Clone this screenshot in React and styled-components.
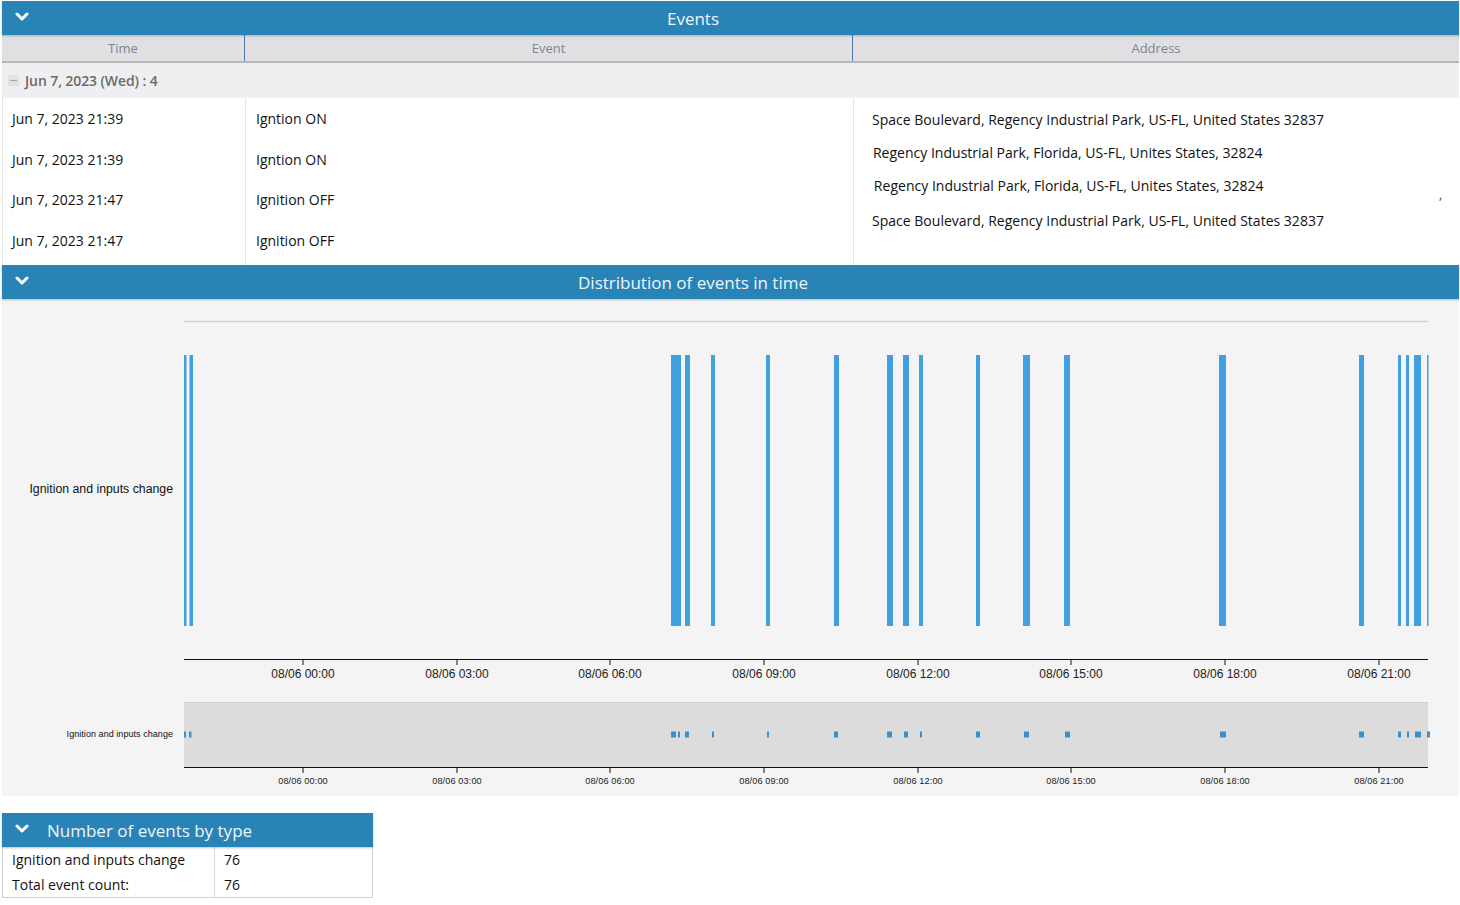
import React from 'react'
import styled, { createGlobalStyle } from 'styled-components'

const GlobalStyle = createGlobalStyle`
  html, body {
    margin: 0;
    padding: 0;
    background: #fff;
  }
  body {
    font-family: "Open Sans", "Noto Sans", sans-serif;
  }
`

const rows = [
  { time: 'Jun 7, 2023 21:39', event: 'Igntion ON' },
  { time: 'Jun 7, 2023 21:39', event: 'Igntion ON' },
  { time: 'Jun 7, 2023 21:47', event: 'Ignition OFF' },
  { time: 'Jun 7, 2023 21:47', event: 'Ignition OFF' },
]

const addresses = [
  { text: 'Space Boulevard, Regency Industrial Park, US-FL, United States 32837', indent: 0, gap: 0 },
  { text: 'Regency Industrial Park, Florida, US-FL, Unites States, 32824', indent: 1, gap: 0 },
  { text: 'Regency Industrial Park, Florida, US-FL, Unites States, 32824', indent: 2, gap: 0 },
  { text: 'Space Boulevard, Regency Industrial Park, US-FL, United States 32837', indent: 0, gap: 2 },
]

// bar spans in px on the plot, [start, end]
const mainBars = [
  [184, 186.5], [189.5, 193], [671, 681], [685, 690], [711, 715], [766, 770],
  [834, 839], [887, 893], [903, 909], [919, 923], [976, 980], [1023, 1030],
  [1064, 1070], [1219, 1226], [1359, 1364], [1398, 1401], [1406, 1409],
  [1414, 1421], [1427, 1428.5],
]

const navBars = [
  [184, 186], [189, 191.5], [671, 676], [678, 680], [685, 689], [712, 714],
  [767, 769], [834, 838], [887, 892], [904, 908], [920, 922], [976, 980],
  [1024, 1029], [1065, 1070], [1220, 1226], [1359, 1364], [1398, 1401],
  [1407, 1409], [1415, 1421], [1427, 1430],
]

const ticks = [
  [303, '08/06 00:00'], [457, '08/06 03:00'], [610, '08/06 06:00'],
  [764, '08/06 09:00'], [918, '08/06 12:00'], [1071, '08/06 15:00'],
  [1225, '08/06 18:00'], [1379, '08/06 21:00'],
]

const Chevron = () => (
  <ChevronSvg viewBox="0 0 14 10" width="14" height="10">
    <polyline points="2,2 7,7 12,2" fill="none" stroke="#fff" strokeWidth="3" strokeLinecap="round" strokeLinejoin="round" />
  </ChevronSvg>
)

const DistributionChart = () => (
  <ChartSvg viewBox="2 300 1457 497" width="1457" height="497">
    <rect x="2" y="300" width="1457" height="497" fill="#f4f4f4" />
    <line x1="184" y1="322.5" x2="1428" y2="322.5" stroke="#d2d2d2" strokeWidth="1.5" />
    {mainBars.map(([a, b], i) => (
      <rect key={i} x={a} y="356" width={b - a} height="271" fill="#41a0df" />
    ))}
    <text x="173" y="493.5" textAnchor="end" fontSize="12.3" fill="#111">Ignition and inputs change</text>

    <line x1="184" y1="660.5" x2="1428" y2="660.5" stroke="#111" strokeWidth="1.2" />
    {ticks.map(([x, label]) => (
      <g key={label}>
        <line x1={x} y1="660" x2={x} y2="666" stroke="#111" strokeWidth="1" />
        <text x={x} y="678.5" textAnchor="middle" fontSize="12" fill="#222">{label}</text>
      </g>
    ))}

    <rect x="184" y="703" width="1244" height="65" fill="#dcdcdc" />
    <line x1="184" y1="703.5" x2="1428" y2="703.5" stroke="#d0d0d0" strokeWidth="1" />
    {navBars.map(([a, b], i) => (
      <rect key={i} x={a} y="732.5" width={b - a} height="6" fill="#3a8fcc" />
    ))}
    <text x="173" y="738" textAnchor="end" fontSize="9" letterSpacing="0.05" fill="#111">Ignition and inputs change</text>

    <line x1="184" y1="768.5" x2="1428" y2="768.5" stroke="#111" strokeWidth="1.2" />
    {ticks.map(([x, label]) => (
      <g key={label}>
        <line x1={x} y1="768" x2={x} y2="774" stroke="#111" strokeWidth="1" />
        <text x={x} y="784.5" textAnchor="middle" fontSize="9.2" letterSpacing="0.1" fill="#222">{label}</text>
      </g>
    ))}
  </ChartSvg>
)

const App = () => {
  return (
    <>
      <GlobalStyle />
      <Page>
        <Panel>
          <PanelHeader>
            <Chevron />
            <PanelTitle>Events</PanelTitle>
          </PanelHeader>
          <Table>
            <HeadCell>Time</HeadCell>
            <HeadCell>Event</HeadCell>
            <HeadCell last>Address</HeadCell>
          </Table>
          <GroupRow>
            <Collapse>
              <span />
            </Collapse>
            Jun 7, 2023 (Wed) : 4
          </GroupRow>
          <Body>
            {rows.map((r, i) => (
              <React.Fragment key={i}>
                <Cell style={{ gridRow: i + 1 }}>{r.time}</Cell>
                <Cell event style={{ gridRow: i + 1 }}>{r.event}</Cell>
              </React.Fragment>
            ))}
            <AddressCell>
              {addresses.map((a, i) => (
                <AddressLine key={i} indent={a.indent} gap={a.gap}>{a.text}</AddressLine>
              ))}
              <Stray>,</Stray>
            </AddressCell>
          </Body>

          <PanelHeader>
            <Chevron />
            <PanelTitle>Distribution of events in time</PanelTitle>
          </PanelHeader>
          <ChartBox>
            <DistributionChart />
          </ChartBox>
        </Panel>

        <SmallPanel>
          <PanelHeader small>
            <Chevron />
            <SmallTitle>Number of events by type</SmallTitle>
          </PanelHeader>
          <CountTable>
            <CountCell>Ignition and inputs change</CountCell>
            <CountCell value>76</CountCell>
            <CountCell>Total event count:</CountCell>
            <CountCell value>76</CountCell>
          </CountTable>
        </SmallPanel>
      </Page>
    </>
  )
}

export default App

const Page = styled.div`
width: 1460px;
padding: 1px 1px 0 2px;
box-sizing: border-box;
`
const Panel = styled.section`
width: 1457px;
display: flex;
flex-direction: column;
`
const PanelHeader = styled.div`
height: 34px;
background: #2883b7;
display: flex;
align-items: center;
padding: 0 ${p => (p.small ? '0' : '88px')} 0 13px;
box-shadow: 0 1px 2px rgba(0,0,0,0.25);
position: relative;
z-index: 1;
`
const ChevronSvg = styled.svg`
flex: none;
margin-top: -2px;
`
const PanelTitle = styled.div`
flex: 1;
text-align: center;
color: #f0f5fa;
font-size: 17px;
margin-left: -14px;
`
const SmallTitle = styled.div`
color: #f0f5fa;
font-size: 17px;
margin-left: 18px;
`
const Table = styled.div`
display: grid;
grid-template-columns: 243px 608px 606px;
height: 28px;
background: #e0e0e2;
border-bottom: 2px solid #b7b7ba;
box-sizing: border-box;
`
const HeadCell = styled.div`
display: flex;
align-items: center;
justify-content: center;
font-size: 13px;
color: #7c8594;
border-right: ${p => (p.last ? 'none' : '1px solid #4c78a8')};
`
const GroupRow = styled.div`
height: 35px;
background: #efeff1;
display: flex;
align-items: center;
gap: 6px;
padding-left: 6px;
font-size: 14px;
font-weight: 600;
letter-spacing: -0.1px;
color: #6b6b6b;
`
const Collapse = styled.div`
width: 11px;
height: 11px;
background: #e2e2e4;
display: flex;
align-items: center;
justify-content: center;
span {
  width: 7px;
  height: 1.5px;
  background: #a3a3a6;
}
`
const Body = styled.div`
display: grid;
grid-template-columns: 243px 608px 606px;
grid-template-rows: repeat(4, 40.75px);
padding-bottom: 4px;
background: #fff;
border-left: 1px solid #e3e3e3;
`
const Cell = styled.div`
display: flex;
align-items: center;
padding-left: ${p => (p.event ? '10px' : '9px')};
font-size: 14px;
color: #111;
grid-column: ${p => (p.event ? 2 : 1)};
border-right: 1px solid #e3e3e3;
margin-bottom: -4px;
padding-bottom: 4px;
`
const AddressCell = styled.div`
grid-column: 3;
grid-row: 1 / span 4;
padding: 5px 0 0 18px;
position: relative;
`
const AddressLine = styled.div`
height: 33px;
line-height: 33px;
margin-top: ${p => p.gap}px;
padding-left: ${p => p.indent}px;
font-size: 15px;
color: #111;
white-space: nowrap;
transform: scaleX(0.935);
transform-origin: left center;
`
const Stray = styled.span`
position: absolute;
left: 585px;
top: 88px;
font-size: 12px;
color: #333;
`
const ChartBox = styled.div`
height: 497px;
`
const ChartSvg = styled.svg`
display: block;
font-family: "Liberation Sans", Arial, sans-serif;
`
const SmallPanel = styled.section`
width: 371px;
margin-top: 17px;
`
const CountTable = styled.div`
display: grid;
grid-template-columns: 212px 1fr;
grid-auto-rows: 25px;
border: 1px solid #d0d0d0;
border-top: none;
`
const CountCell = styled.div`
display: flex;
align-items: center;
padding-left: 9px;
font-size: 14px;
color: #111;
border-right: ${p => (p.value ? 'none' : '1px solid #dadada')};
`
